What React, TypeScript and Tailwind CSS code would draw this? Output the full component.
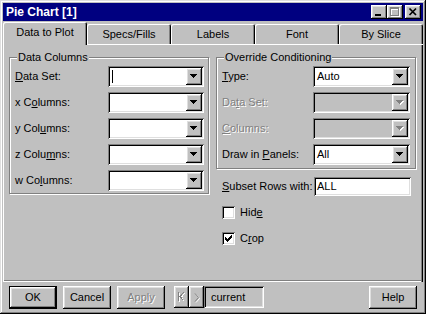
import React from "react";

const raised =
  "shadow-[inset_-1px_-1px_#000,inset_1px_1px_#fff,inset_-2px_-2px_#808080,inset_2px_2px_#dfdfdf]";
const sunken =
  "shadow-[inset_1px_1px_#808080,inset_-1px_-1px_#fff,inset_2px_2px_#000,inset_-2px_-2px_#dfdfdf]";
const disabledText = "text-[#808080] [text-shadow:1px_1px_0_#fff]";
const tabShadow =
  "shadow-[inset_1px_1px_#fff,inset_-1px_0_#000,inset_-2px_0_#808080]";
const groupBox =
  "relative w-[200px] border border-[#808080] shadow-[inset_1px_1px_#fff,1px_1px_#fff]";

const TRI = "M0 0h7v1h-1v1h-1v1h-1v1h-1v-1h-1v-1h-1v-1h-1z";

function Arrow({ disabled }: { disabled?: boolean }) {
  return (
    <svg width="8" height="5" viewBox="0 0 8 5">
      {disabled && <path d={TRI} transform="translate(1,1)" fill="#fff" />}
      <path d={TRI} fill={disabled ? "#808080" : "#000"} />
    </svg>
  );
}

function Combo({
  children,
  disabled,
  wide,
}: {
  children?: React.ReactNode;
  disabled?: boolean;
  wide?: boolean;
}) {
  return (
    <div
      className={`flex h-[21px] p-[2px] ${sunken} ${disabled ? "bg-[#c0c0c0]" : "bg-white"} ${
        wide ? "w-[97px]" : "w-[96px]"
      }`}
    >
      <div className="flex flex-1 items-center pl-[2px] text-black">{children}</div>
      <div className={`flex w-[16px] items-center justify-center bg-[#c0c0c0] ${raised}`}>
        <Arrow disabled={disabled} />
      </div>
    </div>
  );
}

function Check() {
  const rows: [number, number, number][] = [
    [0, 6, 6],
    [1, 5, 6],
    [2, 0, 0],
    [2, 4, 6],
    [3, 0, 1],
    [3, 3, 5],
    [4, 0, 4],
    [5, 1, 3],
    [6, 2, 2],
  ];
  return (
    <svg width="7" height="7" viewBox="0 0 7 7" shapeRendering="crispEdges">
      {rows.map(([y, a, b], i) => (
        <rect key={i} x={a} y={y} width={b - a + 1} height={1} fill="#000" />
      ))}
    </svg>
  );
}

function Checkbox({ checked }: { checked?: boolean }) {
  return (
    <div className={`flex h-[13px] w-[13px] items-center justify-center bg-white ${sunken}`}>
      {checked && <Check />}
    </div>
  );
}

function Btn({
  children,
  def,
  disabled,
}: {
  children: React.ReactNode;
  def?: boolean;
  disabled?: boolean;
}) {
  return (
    <div
      className={`flex h-[23px] w-[48px] items-center justify-center bg-[#c0c0c0] ${
        def
          ? "shadow-[inset_0_0_0_1px_#000,inset_-2px_-2px_#000,inset_2px_2px_#fff,inset_-3px_-3px_#808080,inset_3px_3px_#dfdfdf]"
          : raised
      } ${disabled ? disabledText : "text-black"}`}
    >
      {children}
    </div>
  );
}

export default function App() {
  const tabs = ["Data to Plot", "Specs/Fills", "Labels", "Font", "By Slice"];
  return (
    <div className="h-[314px] w-[426px] overflow-hidden bg-white">
      <div
        className="flex h-[314px] w-[426px] flex-col bg-[#c0c0c0] p-[3px] text-[11px] leading-[13px] text-black shadow-[inset_-1px_-1px_#000,inset_1px_1px_#dfdfdf,inset_-2px_-2px_#808080,inset_2px_2px_#fff] font-['Liberation_Sans',Arial,sans-serif]"
      >
        {/* Title bar */}
        <div className="flex h-[18px] shrink-0 items-center justify-between bg-[#000080] pl-[3px] pr-[2px]">
          <span className="text-[12px] font-bold leading-[14px] text-white">Pie Chart [1]</span>
          <div className="flex items-center">
            <div className={`h-[14px] w-[16px] bg-[#c0c0c0] ${raised}`}>
              <svg width="16" height="14" shapeRendering="crispEdges">
                <rect x="4" y="9" width="6" height="2" fill="#000" />
              </svg>
            </div>
            <div className={`h-[14px] w-[16px] bg-[#c0c0c0] ${raised}`}>
              <svg width="16" height="14" shapeRendering="crispEdges">
                <g transform="translate(1,1)" fill="#fff">
                  <rect x="3" y="2" width="9" height="2" />
                  <rect x="3" y="2" width="1" height="9" />
                  <rect x="11" y="2" width="1" height="9" />
                  <rect x="3" y="10" width="9" height="1" />
                </g>
                <g fill="#808080">
                  <rect x="3" y="2" width="9" height="2" />
                  <rect x="3" y="2" width="1" height="9" />
                  <rect x="11" y="2" width="1" height="9" />
                  <rect x="3" y="10" width="9" height="1" />
                </g>
              </svg>
            </div>
            <div className={`ml-[2px] h-[14px] w-[16px] bg-[#c0c0c0] ${raised}`}>
              <svg width="16" height="14">
                <path d="M4.5 3.5 L11 10 M11 3.5 L4.5 10" stroke="#000" strokeWidth="1.7" />
              </svg>
            </div>
          </div>
        </div>

        {/* Tabs */}
        <div className="flex h-[23px] shrink-0 items-end">
          {tabs.map((t, i) =>
            i === 0 ? (
              <div
                key={t}
                className={`relative z-10 -mb-px flex h-[23px] w-[84px] items-center justify-center rounded-t-[2px] bg-[#c0c0c0] pb-[2px] ${tabShadow}`}
              >
                {t}
              </div>
            ) : (
              <div
                key={t}
                className={`flex h-[20px] w-[84px] items-center justify-center rounded-t-[2px] bg-[#c0c0c0] ${tabShadow}`}
              >
                {t}
              </div>
            )
          )}
        </div>

        {/* Panel */}
        <div className="flex h-[238px] shrink-0 gap-[7px] pl-[6px] pt-[13px] shadow-[inset_1px_1px_#fff,inset_-1px_0_#000,inset_-2px_0_#808080,inset_0_-1px_#fff,inset_0_-2px_#808080]">
          {/* Data Columns */}
          <div className={`${groupBox} h-[137px]`}>
            <span className="absolute -top-[7px] left-[7px] bg-[#c0c0c0] px-[1px]">Data Columns</span>
            <div className="flex flex-col gap-[5px] pt-[8px]">
              <div className="flex items-center justify-between pl-[5px] pr-[4px]">
                <span>
                  <u>D</u>ata Set:
                </span>
                <Combo>
                  <div className="h-[13px] w-px bg-black" />
                </Combo>
              </div>
              <div className="flex items-center justify-between pl-[5px] pr-[4px]">
                <span>
                  x C<u>o</u>lumns:
                </span>
                <Combo />
              </div>
              <div className="flex items-center justify-between pl-[5px] pr-[4px]">
                <span>
                  y Col<u>u</u>mns:
                </span>
                <Combo />
              </div>
              <div className="flex items-center justify-between pl-[5px] pr-[4px]">
                <span>
                  z Colu<u>m</u>ns:
                </span>
                <Combo />
              </div>
              <div className="flex items-center justify-between pl-[5px] pr-[4px]">
                <span>
                  w Co<u>l</u>umns:
                </span>
                <Combo />
              </div>
            </div>
          </div>

          {/* Right column */}
          <div className="flex w-[200px] flex-col">
            <div className={`${groupBox} h-[112px]`}>
              <span className="absolute -top-[7px] left-[7px] bg-[#c0c0c0] px-[1px]">
                Override Conditioning
              </span>
              <div className="flex flex-col gap-[5px] pt-[8px]">
                <div className="flex items-center justify-between pl-[5px] pr-[5px]">
                  <span>
                    <u>T</u>ype:
                  </span>
                  <Combo wide>Auto</Combo>
                </div>
                <div className="flex items-center justify-between pl-[5px] pr-[5px]">
                  <span className={disabledText}>
                    Da<u>t</u>a Set:
                  </span>
                  <Combo wide disabled />
                </div>
                <div className="flex items-center justify-between pl-[5px] pr-[5px]">
                  <span className={disabledText}>
                    <u>C</u>olumns:
                  </span>
                  <Combo wide disabled />
                </div>
                <div className="flex items-center justify-between pl-[5px] pr-[5px]">
                  <span>
                    Draw in <u>P</u>anels:
                  </span>
                  <Combo wide>All</Combo>
                </div>
              </div>
            </div>

            <div className="mt-[8px] flex items-center justify-between pl-[6px] pr-[5px]">
              <span>
                <u>S</u>ubset Rows with:
              </span>
              <div className={`flex h-[19px] w-[97px] items-center bg-white pl-[3px] ${sunken}`}>ALL</div>
            </div>

            <div className="mt-[10px] flex items-center gap-[5px] pl-[6px]">
              <Checkbox />
              <span>
                Hid<u>e</u>
              </span>
            </div>
            <div className="mt-[13px] flex items-center gap-[5px] pl-[6px]">
              <Checkbox checked />
              <span>
                C<u>r</u>op
              </span>
            </div>
          </div>
        </div>

        {/* Buttons */}
        <div className="flex items-start pl-[6px] pr-[6px] pt-[4px]">
          <Btn def>OK</Btn>
          <div className="ml-[6px]">
            <Btn>Cancel</Btn>
          </div>
          <div className="ml-[6px]">
            <Btn disabled>Apply</Btn>
          </div>
          <div className={`ml-[9px] flex h-[22px] w-[15px] items-center justify-center bg-[#c0c0c0] ${raised}`}>
            <svg width="9" height="11" viewBox="0 0 9 11" shapeRendering="crispEdges">
              <g transform="translate(1,1)" fill="none" stroke="#fff" strokeWidth="1">
                <path d="M1.5 0 V9" />
                <path d="M6.5 0.5 L3 4.5 L6.5 8.5" />
              </g>
              <g fill="none" stroke="#808080" strokeWidth="1">
                <path d="M1.5 0 V9" />
                <path d="M6.5 0.5 L3 4.5 L6.5 8.5" />
              </g>
            </svg>
          </div>
          <div className={`flex h-[22px] w-[15px] items-center justify-center bg-[#c0c0c0] ${raised}`}>
            <svg width="7" height="11" viewBox="0 0 7 11">
              <path d="M2 1.5 L5.5 5.5 L2 9.5" transform="translate(1,1)" fill="none" stroke="#fff" />
              <path d="M2 1.5 L5.5 5.5 L2 9.5" fill="none" stroke="#808080" />
            </svg>
          </div>
          <div className={`flex h-[22px] w-[60px] items-center bg-[#c0c0c0] pl-[7px] ${sunken}`}>current</div>
          <div className="flex-1" />
          <Btn>Help</Btn>
        </div>
      </div>
    </div>
  );
}
